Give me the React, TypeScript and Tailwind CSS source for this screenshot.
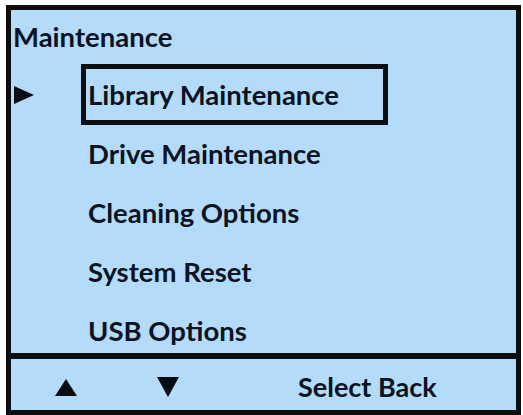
import { Fragment } from 'react'

const ITEMS = [
  'Library Maintenance',
  'Drive Maintenance',
  'Cleaning Options',
  'System Reset',
  'USB Options',
]

/** Little solid triangle used for the cursor and the footer keys. */
function Tri({ dir, className }: { dir: 'right' | 'up' | 'down'; className: string }) {
  const pts =
    dir === 'right' ? '0,0 20,9 0,18' : dir === 'up' ? '11,0 22,17 0,17' : '0,0 22,0 11,20'
  return (
    <svg viewBox={dir === 'right' ? '0 0 20 18' : dir === 'up' ? '0 0 22 17' : '0 0 22 20'} className={className}>
      <polygon points={pts} fill="#080c14" />
    </svg>
  )
}

export default function App() {
  const selected = 0
  return (
    <div className="min-h-screen bg-white pt-[5px] pl-[6px]">
      <div className="flex h-[410px] w-[515px] flex-col border-[5px] border-[#0e0e10] bg-[#b4dbfa] font-['Lato',sans-serif] font-bold text-[#0a1322]">
        <div className="min-h-0 flex-1 overflow-hidden">
          <div className="mt-[14px] h-[26px] pl-[2px] text-[27.5px] leading-[26px]">Maintenance</div>
          <div className="mt-[15px]">
            {ITEMS.map((label, i) => (
              <Fragment key={label}>
                <div className="flex h-[59px] items-center">
                  <div className="w-[70px] shrink-0 pl-[3px]">
                    {i === selected && <Tri dir="right" className="h-[18px] w-[20px]" />}
                  </div>
                  <div
                    className={
                      'flex h-[61px] w-[307px] shrink-0 items-center border-[5px] pl-[2px] text-[27.5px] leading-[26px] ' +
                      (i === selected ? 'border-[#0e0e10]' : 'border-transparent')
                    }
                  >
                    {label}
                  </div>
                </div>
              </Fragment>
            ))}
          </div>
        </div>
        <div className="flex h-[57px] shrink-0 items-center border-t-[6px] border-[#0e0e10] pt-[4px] text-[27px] leading-[26px]">
          <Tri dir="up" className="ml-[44px] mt-[2px] h-[17px] w-[22px]" />
          <Tri dir="down" className="ml-[80px] h-[20px] w-[22px]" />
          <span className="ml-[119px]">Select Back</span>
        </div>
      </div>
    </div>
  )
}
